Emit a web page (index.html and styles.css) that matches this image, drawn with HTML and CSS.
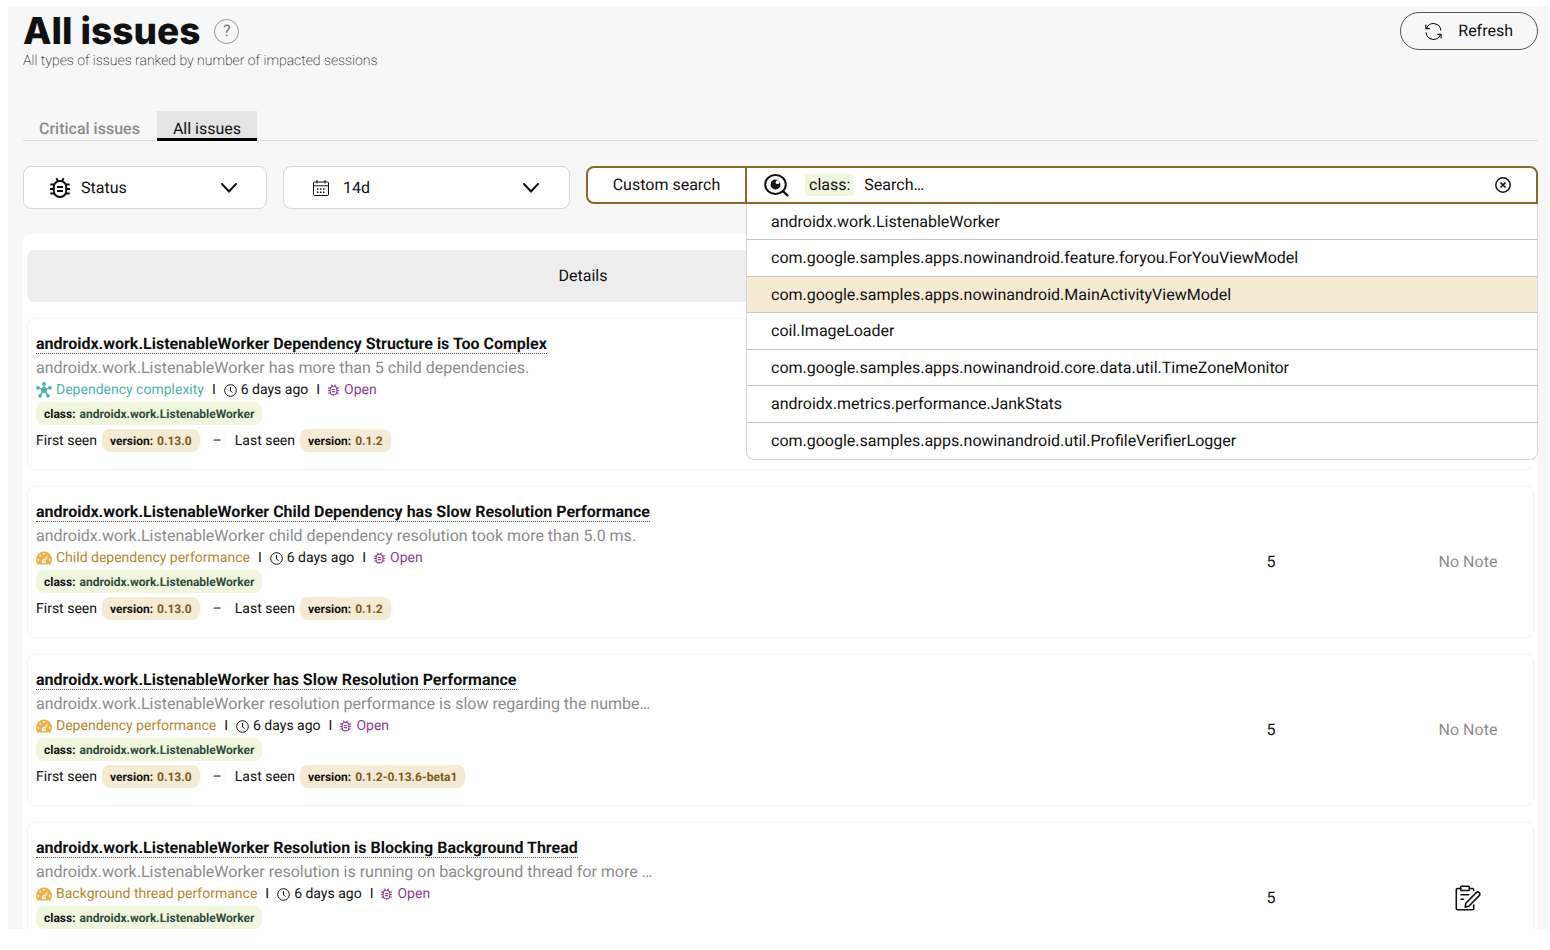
FILE: index.html
```html
<!DOCTYPE html>
<html lang="en">
<head>
<meta charset="utf-8">
<title>All issues</title>
<link rel="stylesheet" href="styles.css">
</head>
<body>
<svg class="sprite" aria-hidden="true">
  <symbol id="bug" viewBox="0 0 20 22">
    <g fill="none" stroke="currentColor" stroke-width="2">
      <rect x="3.800" y="4" width="12.400" height="16" rx="6"/>
      <path d="M6.300 1.200 8 4M13.700 1.200 12 4M.3 7.500h4.600M0 12h4M.3 16.500h4.600M15.100 7.500h4.600M16 12h4M15.100 16.500h4.600M7 10h6M7 14h6"/>
    </g>
  </symbol>
  <symbol id="chevron" viewBox="0 0 16 10"><path d="M1 1l7 7.500L15 1" fill="none" stroke="currentColor" stroke-width="2" stroke-linecap="round"/></symbol>
  <symbol id="calendar" viewBox="0 0 16 16">
    <rect x=".5" y="2" width="15" height="13.500" rx="1" fill="none" stroke="currentColor"/>
    <path d="M.5 5.800h15M4 0v3.500M12 0v3.500" fill="none" stroke="currentColor"/>
    <path d="M4 9h9M4 12.300h9" fill="none" stroke="currentColor" stroke-width="1.500" stroke-dasharray="1.500 1.500"/>
  </symbol>
  <symbol id="refresh" viewBox="0 0 16 16">
    <g fill="none" stroke="currentColor">
      <path d="M1.500 5A7 7 0 0 1 15 7.200M14.500 11A7 7 0 0 1 1 8.800"/>
      <path d="M.8 1.500v3.800H4.500M15.200 14.500v-3.800H11.500"/>
    </g>
  </symbol>
  <symbol id="eye" viewBox="0 0 25 23">
    <ellipse cx="11.500" cy="10.500" rx="10.300" ry="9.400" fill="none" stroke="currentColor" stroke-width="2"/>
    <path d="M18.800 17.200l4.600 4.200" stroke="currentColor" stroke-width="2.400" stroke-linecap="round"/>
    <circle cx="11.500" cy="10.500" r="4.900" fill="currentColor"/>
    <circle cx="13.600" cy="8.200" r="1.900" fill="#fff"/>
  </symbol>
  <symbol id="clear" viewBox="0 0 16 16">
    <circle cx="8" cy="8" r="7.200" fill="none" stroke="currentColor" stroke-width="1.500"/>
    <path d="M5.500 5.500l5 5M10.500 5.500l-5 5" stroke="currentColor" stroke-width="1.700"/>
  </symbol>
  <symbol id="clock" viewBox="0 0 13 13">
    <circle cx="6.500" cy="6.500" r="5.800" fill="none" stroke="currentColor"/>
    <path d="M6.500 3v4l2 1.500" fill="none" stroke="currentColor"/>
  </symbol>
  <symbol id="hub" viewBox="0 0 16 16">
    <path d="M8 8V2M8 8L2 5.800M8 8l6-2.200M8 8l-4 5.500M8 8l4 5.500" stroke="currentColor" stroke-width="1.400"/>
    <g fill="currentColor"><circle cx="8" cy="8" r="3"/><circle cx="8" cy="2" r="1.900"/><circle cx="2" cy="5.800" r="1.900"/><circle cx="14" cy="5.800" r="1.900"/><circle cx="4" cy="13.800" r="1.900"/><circle cx="12" cy="13.800" r="1.900"/></g>
  </symbol>
  <symbol id="gauge" viewBox="0 0 16 14">
    <path d="M8 .5a8 8 0 0 0-8 8c0 1.700.5 3.200 1.300 4.500.2.400.5.500.9.500h11.600c.4 0 .7-.1.900-.5A8.500 8.500 0 0 0 16 8.500a8 8 0 0 0-8-8z" fill="currentColor"/>
    <g fill="#fff"><circle cx="8" cy="3" r=".9"/><circle cx="4.300" cy="4.700" r=".9"/><circle cx="2.500" cy="8.800" r=".9"/><circle cx="13.500" cy="8.800" r=".9"/><path d="M12.200 4.200l-2.700 5.400a2 2 0 1 1-1.600-1.300z"/></g>
    <circle cx="8" cy="9.900" r=".7" fill="currentColor"/>
  </symbol>
  <symbol id="note" viewBox="0 0 26 26">
    <g fill="none" stroke="currentColor" stroke-width="1.600" stroke-linejoin="round" stroke-linecap="round">
      <path d="M5.500 3.500H2.600q-1.300 0-1.300 1.300v18.700q0 1.300 1.300 1.300h14.800q1.300 0 1.300-1.300V20M14.500 3.500h2.900q1.300 0 1.300 1.300v.7"/>
      <rect x="5.700" y="1.200" width="8.600" height="4.300" rx=".8"/>
      <path d="M6 9.800h7.800M6 14.300h2.600M10.800 18.200l10.400-10.600q1.600-1.400 3 0t0 3L13.800 21.200l-3.600.9z"/>
    </g>
  </symbol>
</svg>

<main class="app">
  <header class="top">
    <div>
      <div class="heading">
        <h1 class="title">All issues</h1>
        <button class="help" type="button" aria-label="Help">?</button>
      </div>
      <p class="subtitle">All types of issues ranked by number of impacted sessions</p>
    </div>
    <button class="refresh" type="button"><svg class="icon-refresh"><use href="#refresh"/></svg>Refresh</button>
  </header>

  <nav class="tabs">
    <a class="tab" href="#critical">Critical issues</a>
    <a class="tab tab-active" href="#all" aria-current="page">All issues</a>
  </nav>

  <div class="filters">
    <label class="picker picker-status">
      <svg class="icon-bug"><use href="#bug"/></svg>
      <select class="picker-select" aria-label="Status"><option>Status</option></select>
      <svg class="icon-chevron"><use href="#chevron"/></svg>
    </label>
    <label class="picker picker-date">
      <svg class="icon-calendar"><use href="#calendar"/></svg>
      <select class="picker-select" aria-label="Period"><option>14d</option></select>
      <svg class="icon-chevron"><use href="#chevron"/></svg>
    </label>
    <div class="search">
      <button class="search-mode" type="button">Custom search</button>
      <div class="search-box">
        <svg class="icon-eye"><use href="#eye"/></svg>
        <span class="search-key">class:</span>
        <input class="search-input" type="text" placeholder="Search…" aria-label="Search by class">
        <button class="search-clear" type="button" aria-label="Clear"><svg class="icon-clear"><use href="#clear"/></svg></button>
        <ul class="suggestions">
          <li class="suggestion">androidx.work.ListenableWorker</li>
          <li class="suggestion">com.google.samples.apps.nowinandroid.feature.foryou.ForYouViewModel</li>
          <li class="suggestion suggestion-active">com.google.samples.apps.nowinandroid.MainActivityViewModel</li>
          <li class="suggestion">coil.ImageLoader</li>
          <li class="suggestion">com.google.samples.apps.nowinandroid.core.data.util.TimeZoneMonitor</li>
          <li class="suggestion">androidx.metrics.performance.JankStats</li>
          <li class="suggestion">com.google.samples.apps.nowinandroid.util.ProfileVerifierLogger</li>
        </ul>
      </div>
    </div>
  </div>

  <section class="panel">
    <table class="issues">
      <colgroup><col class="col-details"><col class="col-count"><col class="col-note"></colgroup>
      <thead>
        <tr><th scope="col">Details</th><th></th><th></th></tr>
      </thead>
      <tbody>
        <tr>
          <td>
            <a class="issue-title" href="#issue-1">androidx.work.ListenableWorker Dependency Structure is Too Complex</a>
            <p class="issue-text">androidx.work.ListenableWorker has more than 5 child dependencies.</p>
            <div class="meta"><span class="kind kind-complexity"><svg class="icon-kind"><use href="#hub"/></svg>Dependency complexity</span><span>I</span><span class="age"><svg class="icon-clock"><use href="#clock"/></svg>6 days ago</span><span>I</span><span class="state"><svg class="icon-state"><use href="#bug"/></svg>Open</span></div>
            <div class="tag tag-class">class: <span class="class-name">androidx.work.ListenableWorker</span></div>
            <div class="seen">First seen <span class="tag tag-version">version: <span class="version">0.13.0</span></span><span class="dash">–</span>Last seen <span class="tag tag-version">version: <span class="version">0.1.2</span></span></div>
          </td>
          <td class="center"></td>
          <td class="center"></td>
        </tr>
        <tr>
          <td>
            <a class="issue-title" href="#issue-2">androidx.work.ListenableWorker Child Dependency has Slow Resolution Performance</a>
            <p class="issue-text">androidx.work.ListenableWorker child dependency resolution took more than 5.0 ms.</p>
            <div class="meta"><span class="kind kind-performance"><svg class="icon-kind"><use href="#gauge"/></svg>Child dependency performance</span><span>I</span><span class="age"><svg class="icon-clock"><use href="#clock"/></svg>6 days ago</span><span>I</span><span class="state"><svg class="icon-state"><use href="#bug"/></svg>Open</span></div>
            <div class="tag tag-class">class: <span class="class-name">androidx.work.ListenableWorker</span></div>
            <div class="seen">First seen <span class="tag tag-version">version: <span class="version">0.13.0</span></span><span class="dash">–</span>Last seen <span class="tag tag-version">version: <span class="version">0.1.2</span></span></div>
          </td>
          <td class="center">5</td>
          <td class="center no-note">No Note</td>
        </tr>
        <tr>
          <td>
            <a class="issue-title" href="#issue-3">androidx.work.ListenableWorker has Slow Resolution Performance</a>
            <p class="issue-text">androidx.work.ListenableWorker resolution performance is slow regarding the numbe…</p>
            <div class="meta"><span class="kind kind-performance"><svg class="icon-kind"><use href="#gauge"/></svg>Dependency performance</span><span>I</span><span class="age"><svg class="icon-clock"><use href="#clock"/></svg>6 days ago</span><span>I</span><span class="state"><svg class="icon-state"><use href="#bug"/></svg>Open</span></div>
            <div class="tag tag-class">class: <span class="class-name">androidx.work.ListenableWorker</span></div>
            <div class="seen">First seen <span class="tag tag-version">version: <span class="version">0.13.0</span></span><span class="dash">–</span>Last seen <span class="tag tag-version">version: <span class="version">0.1.2-0.13.6-beta1</span></span></div>
          </td>
          <td class="center">5</td>
          <td class="center no-note">No Note</td>
        </tr>
        <tr>
          <td>
            <a class="issue-title" href="#issue-4">androidx.work.ListenableWorker Resolution is Blocking Background Thread</a>
            <p class="issue-text">androidx.work.ListenableWorker resolution is running on background thread for more …</p>
            <div class="meta"><span class="kind kind-performance"><svg class="icon-kind"><use href="#gauge"/></svg>Background thread performance</span><span>I</span><span class="age"><svg class="icon-clock"><use href="#clock"/></svg>6 days ago</span><span>I</span><span class="state"><svg class="icon-state"><use href="#bug"/></svg>Open</span></div>
            <div class="tag tag-class">class: <span class="class-name">androidx.work.ListenableWorker</span></div>
            <div class="seen"></div>
          </td>
          <td class="center">5</td>
          <td class="center"><button class="note" type="button" aria-label="Open note"><svg class="icon-note"><use href="#note"/></svg></button></td>
        </tr>
      </tbody>
    </table>
  </section>
</main>
</body>
</html>
```
FILE: styles.css
```css
* { box-sizing: border-box; }

body {
  margin: 0;
  padding: 6px 1px 21px 8px;
  height: 100vh;
  background: #fff;
  color: #111;
  font-family: Roboto, "Liberation Sans", sans-serif;
  font-size: 16px;
  line-height: 20px;
  text-rendering: geometricPrecision;
}

button, input, select {
  font: inherit;
  color: inherit;
  background: none;
  border: 0;
  padding: 0;
  margin: 0;
  text-rendering: inherit;
}

svg { display: block; flex: none; }
.sprite { position: absolute; width: 0; height: 0; }

.app {
  height: 100%;
  overflow: hidden;
  padding: 6px 11px 0 15px;
  background: #f7f7f7;
}

.top { display: flex; justify-content: space-between; align-items: flex-start; }
.heading { display: flex; align-items: center; gap: 14px; height: 38px; }
.title {
  margin: 0;
  font-family: Inter, sans-serif;
  font-size: 37px;
  font-weight: 800;
  line-height: 38px;
}
.help {
  width: 25px;
  height: 25px;
  border: 1px solid #999;
  border-radius: 50%;
  color: #777;
}
.subtitle { margin: 0; font-size: 14px; font-weight: 200; line-height: 22px; }
.refresh {
  display: flex;
  align-items: center;
  gap: 16px;
  height: 38px;
  padding: 0 24px;
  border: 1px solid #555;
  border-radius: 19px;
}
.icon-refresh { width: 17px; height: 17px; }

.tabs { display: flex; gap: 1px; margin-top: 39px; border-bottom: 1px solid #ddd; }
.tab {
  height: 30px;
  margin-bottom: -1px;
  padding: 8px 16px 0;
  color: #8c8c8c;
  font-weight: 500;
  text-decoration: none;
}
.tab-active { border-bottom: 3px solid #000; background: #e4e4e4; color: #111; font-weight: 400; }

.filters { display: flex; align-items: flex-start; gap: 16px; margin-top: 25px; }
.picker {
  display: flex;
  align-items: center;
  height: 43px;
  border: 1px solid #d6d6d6;
  border-radius: 8px;
  background: #fff;
}
.picker-status { width: 244px; gap: 11px; padding: 0 29px 0 26px; }
.picker-date { width: 287px; gap: 14px; padding: 0 30px 0 29px; }
.picker-select { flex: 1; min-width: 0; appearance: none; }
.icon-bug { width: 20px; height: 22px; }
.icon-chevron { width: 16px; height: 10px; }
.icon-calendar { width: 16px; height: 16px; }

.search {
  display: flex;
  flex: 1;
  height: 38px;
  border: 2px solid #8a6a2a;
  border-radius: 8px 8px 0 8px;
  background: #fff;
}
.search-mode { width: 159px; border-right: 2px solid #8a6a2a; }
.search-box { position: relative; display: flex; flex: 1; align-items: center; padding: 0 25px 0 17px; }
.icon-eye { width: 25px; height: 23px; }
.search-key { margin: 0 10px 0 16px; padding: 1px 4px; border-radius: 4px; background: #f1f6df; }
.search-input { flex: 1; min-width: 0; outline: 0; }
.search-input::placeholder { color: #111; opacity: 1; }
.icon-clear { width: 16px; height: 16px; }

.suggestions {
  position: absolute;
  z-index: 2;
  top: calc(100% + 2px);
  left: -1px;
  right: -2px;
  display: grid;
  grid-auto-rows: 1fr;
  height: 256px;
  margin: 0;
  padding: 0;
  border: 1px solid #d6d6d6;
  border-top: 0;
  border-radius: 0 0 8px 8px;
  background: #fff;
  list-style: none;
}
.suggestion { padding: 8px 24px 0; border-bottom: 1px solid #c4c4c4; }
.suggestion:last-child { border-bottom: 0; }
.suggestion-active { background: #f5ead3; }

.panel { margin-top: 25px; padding: 0 4px; border-radius: 8px; background: #fff; }
.issues { width: 100%; table-layout: fixed; border-collapse: separate; border-spacing: 0 16px; }
.col-count { width: 264px; }
.col-note { width: 131px; }
.issues th { height: 52px; padding: 0; background: #ededed; font-weight: 400; }
.issues td { height: 152px; padding: 16px 8px 0; border: solid #f4f4f4; border-width: 1px 0; vertical-align: top; }
.issues td:first-child { border-left-width: 1px; }
.issues td:last-child { border-right-width: 1px; }
.issues th:first-child, .issues td:first-child { border-radius: 8px 0 0 8px; }
.issues th:last-child, .issues td:last-child { border-radius: 0 8px 8px 0; }
.issues td.center { padding: 0; text-align: center; vertical-align: middle; }
.issues td.no-note { color: #8c8c8c; }

.issue-title {
  display: block;
  width: fit-content;
  border-bottom: 1px dotted #555;
  color: #111;
  font-weight: 700;
  line-height: 18px;
  text-decoration: none;
}
.issue-text {
  margin: 2px 0 0;
  overflow: hidden;
  color: #8c8c8c;
  line-height: 23px;
  text-overflow: ellipsis;
  white-space: nowrap;
}
.meta { display: flex; align-items: center; gap: 8px; font-size: 14px; line-height: 22px; }
.kind, .age, .state { display: flex; align-items: center; gap: 4px; }
.kind-complexity { color: #4fb3ab; }
.kind-performance { color: #b8862e; }
.kind-performance .icon-kind { color: #f0b048; }
.state { gap: 5px; color: #8c3a94; }
.icon-kind { width: 16px; height: 16px; }
.icon-clock { width: 13px; height: 13px; }
.icon-state { width: 11px; height: 12px; }

.tag { display: flex; gap: 4px; width: fit-content; padding: 1px 8px 0; border-radius: 8px; font-size: 12px; font-weight: 700; line-height: 22px; }
.tag-class { margin-top: 1px; background: #f1f6df; }
.tag-version { margin-left: 5px; background: #f5ead3; }
.class-name { color: #2f4d3c; }
.version { color: #7a5c1e; }
.seen { display: flex; align-items: center; height: 23px; margin-top: 4px; font-size: 14px; }
.dash { margin: 0 13px; }
.icon-note { width: 26px; height: 26px; }
.note { display: block; margin: 0 auto; }
```
